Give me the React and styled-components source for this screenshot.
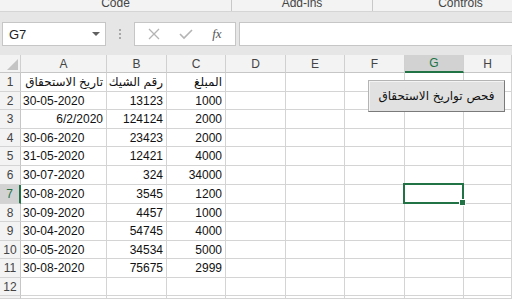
import React from 'react';
import styled, { createGlobalStyle, css } from 'styled-components';

const GlobalStyle = createGlobalStyle`
  html, body {
    margin: 0;
    padding: 0;
    overflow: hidden;
    background: #ffffff;
  }
  body {
    font-family: "Liberation Sans", "DejaVu Sans", Arial, sans-serif;
  }
`;

const Page = styled.div`
  width: 512px;
  height: 299px;
  display: flex;
  flex-direction: column;
  overflow: hidden;
  background: #ffffff;
`;

const RibbonLabels = styled.div`
  height: 11px;
  flex: none;
  display: grid;
  grid-template-columns: 232px 141px 175px;
  background: #f3f3f3;
  border-bottom: 1px solid #d5d5d5;
  overflow: hidden;
`;

const Group = styled.div`
  display: flex;
  justify-content: center;
  align-items: flex-end;
  font-size: 12px;
  line-height: 14px;
  color: #444444;
  border-right: ${(p) => (p.last ? 'none' : '1px solid #c8c8c8')};
  height: 11px;
  padding-bottom: 1px;
  box-sizing: border-box;
`;

const FormulaArea = styled.div`
  height: 43px;
  flex: none;
  background: #e6e6e6;
  display: flex;
  align-items: flex-start;
  padding-top: 10px;
  padding-left: 2px;
  box-sizing: border-box;
`;

const Box = styled.div`
  height: 24px;
  box-sizing: border-box;
  background: #ffffff;
  border: 1px solid #c6c6c6;
  display: flex;
  align-items: center;
`;

const NameBox = styled(Box)`
  width: 104px;
  padding: 0 5px 0 6px;
  justify-content: space-between;
  font-size: 13px;
  color: #222222;
`;

const Caret = styled.span`
  width: 0;
  height: 0;
  border-left: 4px solid transparent;
  border-right: 4px solid transparent;
  border-top: 4px solid #606060;
`;

const Grip = styled.div`
  width: 28px;
  height: 24px;
  display: flex;
  flex-direction: column;
  align-items: center;
  justify-content: center;
  gap: 2px;
`;

const Dot = styled.span`
  width: 2px;
  height: 2px;
  background: #a8a8a8;
`;

const FxBox = styled(Box)`
  width: 102px;
  justify-content: space-around;
  padding: 0 4px;
`;

const FxLabel = styled.span`
  font-family: "Liberation Serif", "DejaVu Serif", serif;
  font-style: italic;
  font-size: 13px;
  color: #555555;
`;

const FormulaInput = styled(Box)`
  flex: 1;
  margin-left: 3px;
  border-right: none;
`;

const Sheet = styled.div`
  position: relative;
  display: grid;
  grid-template-columns: 21px 86px 60px 59px 60px 59px 60px 59px 1fr;
  grid-template-rows: 18px 19px 18px 19px 18px 19px 19px 19px 18px 19px 18px 19px 18px 1fr;
  flex: 1;
`;

const HeadCell = styled.div`
  box-sizing: border-box;
  background: ${(p) => (p.active ? '#d2d2d2' : '#f3f3f3')};
  border-right: 1px solid #d0d0d0;
  border-bottom: 1px solid #c6c6c6;
  color: #444444;
  font-size: 12px;
  display: flex;
  align-items: center;
  justify-content: center;
  ${(p) =>
    p.active &&
    css`
      border-bottom: 2px solid #217346;
      color: #217346;
    `}
`;

const RowHead = styled(HeadCell)`
  border-bottom: 1px solid #d4d4d4;
  border-right: 1px solid #c6c6c6;
  ${(p) =>
    p.active &&
    css`
      border-bottom: 1px solid #d4d4d4;
      border-right: 2px solid #217346;
    `}
`;

const Corner = styled(HeadCell)`
  position: relative;
  &::after {
    content: '';
    position: absolute;
    right: 2px;
    bottom: 2px;
    width: 11px;
    height: 11px;
    background: #c4c4c4;
    clip-path: polygon(100% 0, 100% 100%, 0 100%);
  }
`;

const Cell = styled.div`
  position: relative;
  box-sizing: border-box;
  border-right: 1px solid #d4d4d4;
  border-bottom: 1px solid #d4d4d4;
  font-size: 12px;
  color: #111111;
  display: flex;
  align-items: center;
  justify-content: ${(p) => (p.align === 'right' ? 'flex-end' : 'flex-start')};
  padding: 0 3px 0 2px;
  white-space: nowrap;
  ${(p) =>
    p.selected &&
    css`
      &::after {
        content: '';
        position: absolute;
        left: -2px;
        top: -2px;
        right: -1px;
        bottom: -1px;
        border: 2px solid #217346;
        pointer-events: none;
      }
      &::before {
        content: '';
        position: absolute;
        right: -3px;
        bottom: -3px;
        width: 5px;
        height: 5px;
        background: #217346;
        border: 1px solid #ffffff;
        z-index: 2;
      }
    `}
`;

const Macro = styled.button`
  position: absolute;
  left: 368px;
  top: 25px;
  width: 137px;
  height: 32px;
  box-sizing: border-box;
  background: #e1e1e1;
  border: 1px solid #b4b4b4;
  border-right-color: #7a7a7a;
  border-bottom-color: #7a7a7a;
  box-shadow: inset 1px 1px 0 #f4f4f4;
  font-family: "DejaVu Sans", sans-serif;
  font-size: 12px;
  color: #111111;
  padding: 0;
  direction: rtl;
`;

const columns = ['A', 'B', 'C', 'D', 'E', 'F', 'G', 'H'];

const rows = [
  ['تاريخ الاستحقاق', 'رقم الشيك', 'المبلغ'],
  ['30-05-2020', '13123', '1000'],
  ['6/2/2020', '124124', '2000'],
  ['30-06-2020', '23423', '2000'],
  ['31-05-2020', '12421', '4000'],
  ['30-07-2020', '324', '34000'],
  ['30-08-2020', '3545', '1200'],
  ['30-09-2020', '4457', '1000'],
  ['30-04-2020', '54745', '4000'],
  ['30-05-2020', '34534', '5000'],
  ['30-08-2020', '75675', '2999'],
  [],
  [],
];

function alignFor(rowIdx, colIdx, value) {
  if (rowIdx === 0) return 'right';
  if (colIdx === 0) return value && value.includes('/') ? 'right' : 'left';
  return 'right';
}

function App() {
  return (
    <Page>
      <GlobalStyle />
      <RibbonLabels>
        <Group>Code</Group>
        <Group>Add-ins</Group>
        <Group last>Controls</Group>
      </RibbonLabels>
      <FormulaArea>
        <NameBox>
          G7
          <Caret />
        </NameBox>
        <Grip>
          <Dot />
          <Dot />
          <Dot />
        </Grip>
        <FxBox>
          <svg width="12" height="12" viewBox="0 0 12 12">
            <path d="M1 1 L11 11 M11 1 L1 11" stroke="#b4b4b4" strokeWidth="1.3" fill="none" />
          </svg>
          <svg width="14" height="12" viewBox="0 0 14 12">
            <path d="M1 6 L5 10 L13 2" stroke="#b4b4b4" strokeWidth="1.6" fill="none" />
          </svg>
          <FxLabel>fx</FxLabel>
        </FxBox>
        <FormulaInput />
      </FormulaArea>
      <Sheet>
        <Corner />
        {columns.map((c) => (
          <HeadCell key={c} active={c === 'G'}>
            {c}
          </HeadCell>
        ))}
        {rows.map((r, ri) => (
          <React.Fragment key={ri}>
            <RowHead active={ri === 6}>{ri < 12 ? ri + 1 : ''}</RowHead>
            {columns.map((c, ci) => (
              <Cell
                key={c}
                align={alignFor(ri, ci, r[ci])}
                selected={ri === 6 && c === 'G'}
              >
                {r[ci] || ''}
              </Cell>
            ))}
          </React.Fragment>
        ))}
        <Macro>فحص تواريخ الاستحقاق</Macro>
      </Sheet>
    </Page>
  );
}

export default App;
